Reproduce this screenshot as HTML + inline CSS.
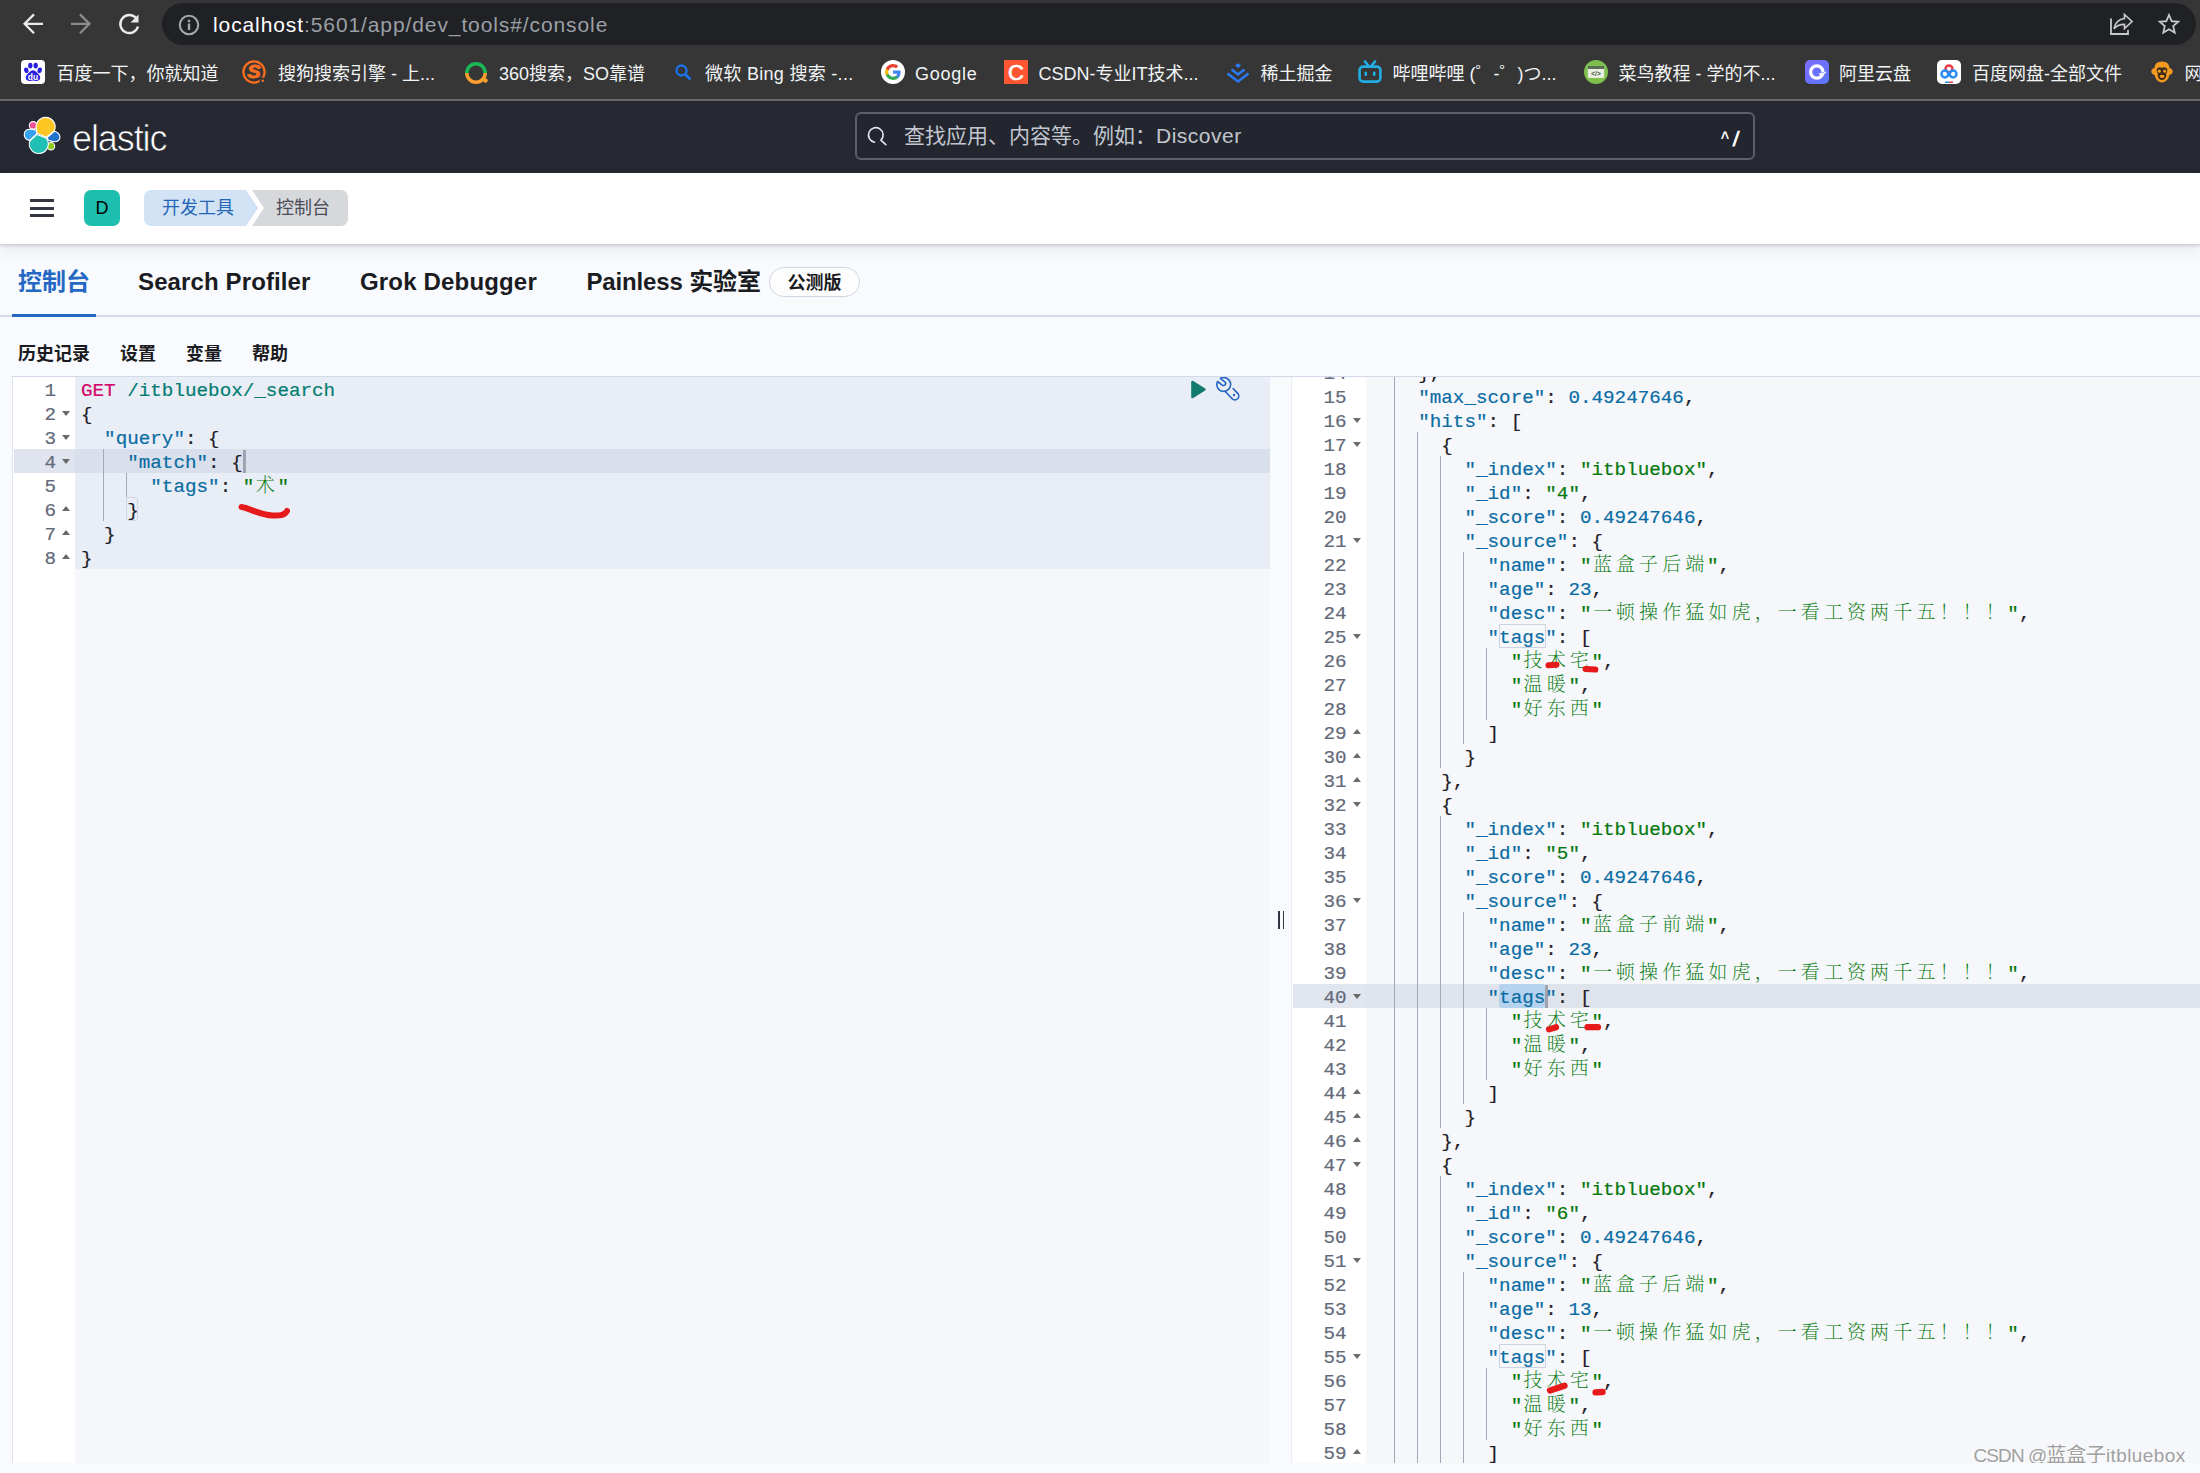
<!DOCTYPE html>
<html lang="zh-CN"><head><meta charset="utf-8"><title>Console - Dev Tools - Elastic</title>
<style>
*{box-sizing:border-box;margin:0;padding:0}
html,body{width:2200px;height:1473px;overflow:hidden;background:#f9fafd}
body{position:relative;font-family:"Liberation Sans","Noto Sans CJK SC",sans-serif;color:#1a1c21}
.abs{position:absolute}
#chrome{position:absolute;left:0;top:0;width:2200px;height:101px;background:#363636}
#chrome .line{position:absolute;left:0;top:98.8px;width:2200px;height:2.2px;background:#686868}
#url{position:absolute;left:162px;top:3px;width:2034px;height:42px;border-radius:21px;background:#202124}
#urltxt{position:absolute;left:213px;top:9.7px;height:30px;line-height:30px;font-size:21px;color:#9aa0a6;white-space:pre;letter-spacing:0.9px}
#urltxt b{font-weight:normal;color:#ffffff}
.bm{position:absolute;top:61px;height:26px;line-height:26px;font-size:18px;color:#f1f3f4;white-space:pre}
.ico{position:absolute;top:60px;width:24px;height:24px}
#kh{position:absolute;left:0;top:101px;width:2200px;height:72px;background:#252830}
#kh .tl{display:none}
#elastic{position:absolute;left:72px;top:15.5px;height:44px;line-height:44px;font-size:36px;color:#fff;letter-spacing:-1.1px;-webkit-text-stroke:0.7px #252830}
#search{position:absolute;left:855px;top:11px;width:900px;height:48px;border:2px solid #5c5f68;border-radius:6px;background:#23262e}
#search .ph{position:absolute;left:47px;top:7px;height:30px;line-height:30px;font-size:21px;color:#c2c6cf;white-space:pre}
#search .kb{position:absolute;left:863px;top:8px;font-size:21px;font-weight:bold;color:#fff;line-height:30px;letter-spacing:1px}
#nav{position:absolute;left:0;top:173px;width:2200px;height:71px;background:#fff;box-shadow:0 1.5px 2.5px rgba(90,100,130,0.22),0 6px 12px rgba(90,100,130,0.10)}
#ham i{position:absolute;left:30px;width:24px;height:3px;background:#343741}
#avatar{position:absolute;left:84px;top:17px;width:36px;height:36px;border-radius:7px;background:#1fbfb0;color:#000;font-size:18px;line-height:36px;text-align:center}
.bc{position:absolute;top:18.3px;height:36px;line-height:35px;font-size:18px;white-space:pre}
#tabs .t{position:absolute;top:263.5px;height:36px;line-height:36px;font-size:24px;font-weight:bold;color:#1a1c21;white-space:pre}
#tabline{position:absolute;left:0;top:315px;width:2200px;height:2px;background:#d5dbe7}
#tabul{position:absolute;left:12px;top:314px;width:84px;height:3px;background:#2367c0}
#badge{position:absolute;left:769px;top:267px;width:91px;height:30px;border:1.5px solid #cfd6e3;border-radius:15px;font-size:18px;font-weight:bold;line-height:30.5px;text-align:center;color:#1a1c21;background:#fdfdfe}
.sm{position:absolute;top:339.8px;height:28px;line-height:28px;font-size:18px;font-weight:bold;color:#1a1c21;white-space:pre}
#edline{position:absolute;left:12px;top:375.5px;width:2188px;height:1.5px;background:#d3d9e6}
#left{position:absolute;left:12px;top:377px;width:1258px;height:1086px;background:#f5f7fa;overflow:hidden;border-left:1px solid #dfe3ec}
#right{position:absolute;left:1291px;top:377px;width:909px;height:1086px;background:#f5f7fa;overflow:hidden;border-left:1px solid #eaedf4}
.gut{position:absolute;left:0;top:0;height:1086px;background:#fff}
.code{font-family:"Liberation Mono","Noto Serif CJK SC",monospace;font-size:19.25px}
.ln{position:absolute;height:24px;line-height:24px;text-align:right;color:#626978;white-space:pre;-webkit-text-stroke:0.2px currentColor}
.cl{position:absolute;height:24px;line-height:24px;white-space:pre;color:#1f2127;-webkit-text-stroke:0.2px currentColor}
.cl span, .ln span{position:relative;top:2px}
.cj{font-family:"Noto Serif CJK SC",serif;font-size:19px;font-weight:200;letter-spacing:4.1px;margin-left:1.4px;margin-right:-1.4px;top:2.2px !important;line-height:0;-webkit-text-stroke:0 transparent}
.m{color:#d3076a}.u{color:#017d73}.k{color:#0a6ca3}.s{color:#04780a}.n{color:#0a6ca3}.p{color:#1f2127}
.g{position:absolute;width:1px;background:#a3a9b9}
.fd{position:absolute;width:0;height:0;border-left:4.5px solid transparent;border-right:4.5px solid transparent}
.fd.d{border-top:5.5px solid #6a6a6a}
.fd.up{border-bottom:5.5px solid #6a6a6a}
</style></head>
<body>
<div id="chrome"><div class="line"></div>
<svg class="abs" style="left:20px;top:11px" width="26" height="26" viewBox="0 0 26 26"><path d="M23 12.800H6M14 3.400 4.600 12.800l9.400 9.400" fill="none" stroke="#e8eaed" stroke-width="2.300"/></svg>
<svg class="abs" style="left:68px;top:11px" width="26" height="26" viewBox="0 0 26 26"><path d="M3 12.800h17M12 3.400l9.400 9.400-9.400 9.400" fill="none" stroke="#8a8c8e" stroke-width="2.300"/></svg>
<svg class="abs" style="left:116.300px;top:10.800px" width="26" height="26" viewBox="0 0 26 26"><path d="M20.2 7.2A9 9 0 1 0 22 15.5" fill="none" stroke="#e8eaed" stroke-width="2.4"/><path d="M22.5 3.5v8h-8z" fill="#e8eaed"/></svg>
<div id="url"></div>
<svg class="abs" style="left:178.300px;top:13.500px" width="22" height="22" viewBox="0 0 22 22"><circle cx="11" cy="11" r="9.200" fill="none" stroke="#a2a8ae" stroke-width="2.100"/><rect x="9.800" y="9.500" width="2.400" height="6.500" fill="#a2a8ae"/><rect x="9.800" y="5.800" width="2.400" height="2.400" fill="#a2a8ae"/></svg>
<div id="urltxt"><b>localhost</b>:5601/app/dev_tools#/console</div>
<svg class="abs" style="left:2108px;top:12px" width="27" height="25" viewBox="0 0 27 25"><path d="M3 6.5V22h17v-4" fill="none" stroke="#c7c9cc" stroke-width="1.8"/><path d="M16.5 2.5l7.5 7-7.500 7v-4.200c-5 0-8 1.200-10.500 4.500 1-5.500 4-9.500 10.500-10.300z" fill="none" stroke="#c7c9cc" stroke-width="1.7" stroke-linejoin="miter"/></svg>
<svg class="abs" style="left:2156px;top:11px" width="26" height="26" viewBox="0 0 26 26"><path transform="translate(13 13.500) scale(0.920) translate(-13 -13.500)" d="M13 3.200l2.900 6.700 7.200.65-5.500 4.750 1.650 7.100L13 18.600 6.750 22.400 8.400 15.300 2.900 10.550l7.200-.65z" fill="none" stroke="#c7c9cc" stroke-width="1.9" stroke-linejoin="miter"/></svg>
<svg class="ico" style="left:21px" viewBox="0 0 24 24"><rect width="24" height="24" rx="4" fill="#fff"/><g fill="#2a1fe0"><ellipse cx="5.300" cy="10.300" rx="2.200" ry="2.900" transform="rotate(-15 5.300 10.300)"/><ellipse cx="9.300" cy="5.600" rx="2.200" ry="2.900"/><ellipse cx="14.700" cy="5.600" rx="2.200" ry="2.900"/><ellipse cx="18.700" cy="10.300" rx="2.200" ry="2.900" transform="rotate(15 18.700 10.300)"/><path d="M12 10.200c2.800 0 3.800 2.400 5.600 4.100 2.100 2 2.500 5.600-.9 6.500-1.900.5-3.200-.3-4.700-.3s-2.800.8-4.700.3c-3.400-.9-3-4.500-.9-6.500 1.800-1.700 2.800-4.100 5.600-4.100z"/></g><text x="12" y="19.600" font-size="8.500" font-weight="bold" font-family="Liberation Sans,sans-serif" text-anchor="middle" fill="#fff">du</text></svg>
<div class="bm" style="left:56.5px;letter-spacing:0px">百度一下，你就知道</div>
<svg class="ico" style="left:242px" viewBox="0 0 24 24"><circle cx="12" cy="12" r="10.600" fill="none" stroke="#fd6f1f" stroke-width="2.200"/><text x="10.500" y="18.200" font-size="17.500" font-weight="bold" font-style="italic" font-family="Liberation Sans,sans-serif" text-anchor="middle" fill="#fd6f1f" stroke="#fd6f1f" stroke-width="0.800" transform="scale(1.15 1)">S</text><circle cx="20.500" cy="20.500" r="3" fill="#363636"/><circle cx="20.800" cy="20.800" r="1.300" fill="#fd6f1f"/></svg>
<div class="bm" style="left:278.0px;letter-spacing:0px">搜狗搜索引擎 - 上...</div>
<svg class="ico" style="left:464px" viewBox="0 0 24 24"><path d="M2.800 13a9.200 9.200 0 0 1 18.400 0" fill="none" stroke="#19b955" stroke-width="3.500"/><path d="M2.800 13a9.200 9.200 0 0 0 18.400 0" fill="none" stroke="#ff9f2e" stroke-width="3.500"/><circle cx="21.500" cy="20.500" r="2.200" fill="#ff9f2e"/></svg>
<div class="bm" style="left:499.0px;letter-spacing:0px">360搜索，SO靠谱</div>
<svg class="ico" style="left:671px" viewBox="0 0 24 24"><circle cx="10.500" cy="10.500" r="5" fill="none" stroke="#1a73e8" stroke-width="2.300"/><path d="M14 14l5.500 5.500" stroke="#1a73e8" stroke-width="2.600"/></svg>
<div class="bm" style="left:705.0px;letter-spacing:0.3px">微软 Bing 搜索 -...</div>
<svg class="ico" style="left:881px" viewBox="0 0 24 24"><circle cx="12" cy="12" r="12" fill="#fff"/><path d="M19.600 12.200c0-.6-.05-1.100-.15-1.600H12v3.100h4.300c-.2 1-.75 1.850-1.600 2.400v2h2.550c1.500-1.400 2.350-3.400 2.350-5.900z" fill="#4285f4"/><path d="M12 20c2.150 0 3.950-.7 5.250-1.900l-2.550-2c-.7.470-1.600.750-2.700.750-2.100 0-3.850-1.400-4.500-3.300H4.900v2.050C6.200 18.200 8.900 20 12 20z" fill="#34a853"/><path d="M7.500 13.550c-.15-.5-.25-1-.25-1.550s.1-1.050.25-1.550V8.400H4.900C4.350 9.500 4 10.700 4 12s.35 2.500.9 3.600l2.600-2.050z" fill="#fbbc05"/><path d="M12 7.150c1.200 0 2.250.4 3.100 1.200l2.250-2.250C16 4.800 14.150 4 12 4 8.900 4 6.200 5.800 4.900 8.400l2.600 2.050c.65-1.900 2.400-3.300 4.500-3.300z" fill="#ea4335"/></svg>
<div class="bm" style="left:915.0px;letter-spacing:0.75px">Google</div>
<svg class="ico" style="left:1004px" viewBox="0 0 24 24"><rect width="24" height="24" fill="#fc5531"/><text x="12" y="19.800" font-size="22" font-family="Liberation Sans,sans-serif" text-anchor="middle" fill="#fff" stroke="#fff" stroke-width="0.700">C</text></svg>
<div class="bm" style="left:1038.5px;letter-spacing:0px">CSDN-专业IT技术...</div>
<svg class="ico" style="left:1226px" viewBox="0 0 24 24"><g fill="none" stroke="#2b7bf6" stroke-width="2.500"><path d="M1.500 13.500 12 21.500 22.500 13.500"/><path d="M5.500 9.500 12 14.500 18.500 9.500"/></g><path d="M12 3.200 15 5.600 12 8 9 5.600z" fill="#2b7bf6"/></svg>
<div class="bm" style="left:1260.5px;letter-spacing:0px">稀土掘金</div>
<svg class="ico" style="left:1358px" viewBox="0 0 24 24"><rect x="1.600" y="6.600" width="20.800" height="15" rx="3.500" fill="none" stroke="#23ade5" stroke-width="2.600"/><path d="M7 1.500l3.200 4M17 1.500l-3.200 4" stroke="#23ade5" stroke-width="2.600" stroke-linecap="round"/><rect x="6.500" y="11.500" width="2.600" height="4.500" rx="1.200" fill="#23ade5"/><rect x="14.900" y="11.500" width="2.600" height="4.500" rx="1.200" fill="#23ade5"/></svg>
<div class="bm" style="left:1392.5px;letter-spacing:0px">哔哩哔哩 (゜-゜)つ...</div>
<svg class="ico" style="left:1584px" viewBox="0 0 24 24"><circle cx="12" cy="12" r="12" fill="#7fbf4d"/><rect x="3.800" y="6" width="16.400" height="12" rx="1.500" fill="#e8efe0"/><rect x="3.800" y="6" width="16.400" height="3" fill="#5b6b55"/><text x="12" y="16.300" font-size="6.500" font-weight="bold" font-family="Liberation Sans,sans-serif" text-anchor="middle" fill="#4c5a48">&lt;/&gt;</text></svg>
<div class="bm" style="left:1618.5px;letter-spacing:0px">菜鸟教程 - 学的不...</div>
<svg class="ico" style="left:1805px" viewBox="0 0 24 24"><defs><linearGradient id="ag" x1="0" y1="0" x2="1" y2="1"><stop offset="0" stop-color="#7d6bfb"/><stop offset="1" stop-color="#5a78fb"/></linearGradient></defs><rect width="24" height="24" rx="5" fill="url(#ag)"/><circle cx="11.800" cy="12" r="6.200" fill="none" stroke="#fff" stroke-width="3.200"/><path d="M21.500 11.200c-2.300 2.600-5.200 2.700-7.300 1.600" fill="none" stroke="#6a72fb" stroke-width="1.800"/><path d="M20.300 12.300c-1.600 1.800-3.800 2.100-5.600 1.500" fill="none" stroke="#fff" stroke-width="1.600" stroke-linecap="round"/></svg>
<div class="bm" style="left:1839.0px;letter-spacing:0px">阿里云盘</div>
<svg class="ico" style="left:1937px" viewBox="0 0 24 24"><rect width="24" height="24" rx="5" fill="#fff"/><circle cx="12" cy="8.800" r="3.400" fill="none" stroke="#f0394a" stroke-width="2.500"/><circle cx="7.900" cy="14" r="3.400" fill="none" stroke="#2a8df5" stroke-width="2.500"/><circle cx="16.100" cy="14" r="3.400" fill="none" stroke="#2a8df5" stroke-width="2.500"/><rect x="8" y="21.500" width="4" height="1.500" fill="#2a8df5"/><rect x="12" y="21.500" width="4" height="1.500" fill="#f0394a"/></svg>
<div class="bm" style="left:1972.0px;letter-spacing:0px">百度网盘-全部文件</div>
<svg class="ico" style="left:2150px" viewBox="0 0 24 24"><path d="M12 1.500c4.500 0 7.500 2.800 7.500 6.500 2 .3 3.200 1.800 3.200 3.600s-1.400 3.300-3.300 3.500c-.8 4.400-3.800 7.400-7.400 7.400s-6.600-3-7.400-7.400C2.700 14.900 1.300 13.400 1.300 11.600S2.500 8.300 4.500 8c0-3.700 3-6.500 7.500-6.500z" fill="#f29a22"/><path d="M12 8c1.800-1.600 5-1 5.300 2 .2 1.800-.8 2.800-1.300 4 1 2.700-1 6-4 6s-5-3.300-4-6c-.5-1.200-1.500-2.200-1.300-4 .3-3 3.500-3.600 5.300-2z" fill="#3a2a1a"/><circle cx="9.300" cy="11.200" r="1.600" fill="#f29a22"/><circle cx="14.700" cy="11.200" r="1.600" fill="#f29a22"/><ellipse cx="12" cy="16.300" rx="2.600" ry="1.600" fill="#f29a22"/></svg>
<div class="bm" style="left:2184.5px;letter-spacing:0px">网</div>
</div>
<div id="kh"><div class="tl"></div>
<svg class="abs" style="left:23px;top:15px" width="40" height="40" viewBox="0 0 40 40">
<g stroke="#fff" stroke-width="1.100" stroke-linejoin="round">
<circle cx="10.100" cy="9.400" r="3.800" fill="#f04e98"/>
<circle cx="28" cy="30.200" r="3.700" fill="#8fcb1a"/>
<path d="M4 13.700Q10 12.300 13.200 14.500L13.800 18 6.600 24.500Q1.500 23.500 1.300 19 1.200 15 4 13.700Z" fill="#36a2ef"/>
<path d="M23.900 21.800 31.600 15.200Q36.500 16.500 37 21 37 25 32.300 25.800 28 25.800 25.600 24.300Z" fill="#2274cf"/>
<path d="M14 17.300 13.600 13.700A9.500 9.500 0 1 1 31.200 15L23.300 21.300Z" fill="#fdc623"/>
<path d="M14.100 18.400 23.400 22.300A9.500 9.500 0 1 1 6.800 25Z" fill="#1fbfb3"/>
</g></svg>
<div id="elastic">elastic</div>
<div id="search"><svg class="abs" style="left:8px;top:11px" width="24" height="24" viewBox="0 0 24 24"><path d="M9.53 17.19A7.3 7.3 0 1 1 15.96 15.16L20.8 19.7" fill="none" stroke="#e3e7ee" stroke-width="1.600" stroke-linecap="round"/></svg><div class="ph">查找应用、内容等。例如：<span style="letter-spacing:0.5px">Discover</span></div><div class="kb"><span style="font-size:17px;display:inline-block;transform:scaleX(0.85);position:relative;top:-1px">^</span><span style="display:inline-block;transform:skewX(-9deg);position:relative;top:2px;left:2.3px">/</span></div></div>
</div>
<div id="nav"><div id="ham"><i style="top:26px"></i><i style="top:33.500px"></i><i style="top:41px"></i></div><div id="avatar">D</div>
<svg class="abs" style="left:144px;top:17px" width="206" height="36" viewBox="0 0 206 36"><path d="M7 0H102L114 18 102 36H7a7 7 0 0 1-7-7V7a7 7 0 0 1 7-7z" fill="#d3e3f6"/><path d="M108 0H197a7 7 0 0 1 7 7V29a7 7 0 0 1-7 7H108L120 18z" fill="#d7d8db"/></svg>
<div class="bc" style="left:162px;color:#2466b3">开发工具</div>
<div class="bc" style="left:276px;color:#4a4d57">控制台</div>
</div>
<div id="tabs">
<div class="t" style="left:18px;color:#2468c4">控制台</div>
<div class="t" style="left:138px;letter-spacing:0.12px">Search Profiler</div>
<div class="t" style="left:360px;letter-spacing:0.17px">Grok Debugger</div>
<div class="t" style="left:586.5px;letter-spacing:-0.15px">Painless 实验室</div>
<div id="badge">公测版</div>
</div><div id="tabline"></div><div id="tabul"></div>
<div class="sm" style="left:18px">历史记录</div>
<div class="sm" style="left:120px">设置</div>
<div class="sm" style="left:186px">变量</div>
<div class="sm" style="left:252px">帮助</div>
<div id="edline"></div>
<div id="left" class="code"><div class="gut" style="width:62px"></div>
<div class="abs" style="left:62px;top:0;width:1200px;height:192px;background:#e9edf5"></div>
<div class="abs" style="left:1px;top:72px;width:61px;height:24px;background:#dfe4ee"></div>
<div class="abs" style="left:62px;top:72px;width:1200px;height:24px;background:#dae0eb"></div>
<div class="ln" style="left:0;top:0px;width:43px"><span>1</span></div>
<div class="cl" style="left:68px;top:0px"><span class="m">GET</span><span class="p"> </span><span class="u">/itbluebox/_search</span></div>
<div class="ln" style="left:0;top:24px;width:43px"><span>2</span></div>
<div class="fd d" style="left:48.5px;top:34px"></div>
<div class="cl" style="left:68px;top:24px"><span class="p">{</span></div>
<div class="ln" style="left:0;top:48px;width:43px"><span>3</span></div>
<div class="fd d" style="left:48.5px;top:58px"></div>
<div class="cl" style="left:68px;top:48px"><span class="p">  </span><span class="k">"query"</span><span class="p">: {</span></div>
<div class="ln" style="left:0;top:72px;width:43px"><span>4</span></div>
<div class="fd d" style="left:48.5px;top:82px"></div>
<div class="cl" style="left:68px;top:72px"><span class="p">    </span><span class="k">"match"</span><span class="p">: {</span></div>
<div class="g" style="left:89.90px;top:72px;height:24px"></div>
<div class="ln" style="left:0;top:96px;width:43px"><span>5</span></div>
<div class="cl" style="left:68px;top:96px"><span class="p">      </span><span class="k">"tags"</span><span class="p">: </span><span class="s">"</span><span class="s cj">术</span><span class="s">"</span></div>
<div class="g" style="left:89.90px;top:96px;height:24px"></div>
<div class="g" style="left:113.00px;top:96px;height:24px"></div>
<div class="ln" style="left:0;top:120px;width:43px"><span>6</span></div>
<div class="fd up" style="left:48.5px;top:129px"></div>
<div class="cl" style="left:68px;top:120px"><span class="p">    }</span></div>
<div class="g" style="left:89.90px;top:120px;height:24px"></div>
<div class="ln" style="left:0;top:144px;width:43px"><span>7</span></div>
<div class="fd up" style="left:48.5px;top:153px"></div>
<div class="cl" style="left:68px;top:144px"><span class="p">  }</span></div>
<div class="ln" style="left:0;top:168px;width:43px"><span>8</span></div>
<div class="fd up" style="left:48.5px;top:177px"></div>
<div class="cl" style="left:68px;top:168px"><span class="p">}</span></div>
<div class="abs" style="left:229.70px;top:73px;width:3px;height:23px;background:#9ea3ad"></div>
<div class="abs" style="left:112.70px;top:120px;width:12.05px;height:24px;border:1px solid #d0d5e2;border-radius:3px"></div>
<svg class="abs" style="left:1175.5px;top:0.700px" width="20" height="24" viewBox="0 0 20 24"><path d="M3.300 3.800v15.400L15.600 11.500z" fill="#127a6f" stroke="#127a6f" stroke-width="2.200" stroke-linejoin="round"/></svg>
<svg class="abs" style="left:1199px;top:-1.8px" width="28" height="27" viewBox="0 0 28 27"><g fill="none" stroke="#2365c2" stroke-width="1.600" stroke-linecap="round" stroke-linejoin="round">
<path d="M8.400 3.400 12.800 6.800a2.100 2.100 0 0 1-2.600 3.300L5.500 6.500A6.900 6.900 0 1 0 8.400 3.400z"/>
<path d="M13.500 16.700l6.700 7.000a3.800 3.800 0 0 0 5.500-5.300l-4.600-4.900"/></g><circle cx="22" cy="20" r="1.200" fill="#2365c2"/></svg>
<svg class="abs" style="left:220px;top:120px" width="80" height="30" viewBox="0 0 80 30"><path d="M8.500 10c8 1 18 8 31 8.500 6 .2 12 .5 14.500-4.500" fill="none" stroke="#e61a1a" stroke-width="6" stroke-linecap="round"/></svg>
</div>
<div class="abs" style="left:1278px;top:911px;width:1.600px;height:18px;background:#343741"></div><div class="abs" style="left:1282.500px;top:911px;width:1.600px;height:18px;background:#343741"></div>
<div id="right" class="code"><div class="gut" style="width:74px"></div>
<div class="abs" style="left:1px;top:607px;width:73px;height:24px;background:#e1e5ee"></div>
<div class="abs" style="left:74px;top:607px;width:900px;height:24px;background:#dfe3ec"></div>
<div class="abs" style="left:207.05px;top:607px;width:46.20px;height:24px;background:#b5d3ee;border-radius:3px"></div>
<div class="abs" style="left:253.25px;top:608px;width:2.500px;height:23px;background:#9ea3ad"></div>
<div class="abs" style="left:206.55px;top:247px;width:47.20px;height:24px;border:1px solid #cdd3e1"></div>
<div class="abs" style="left:206.55px;top:967px;width:47.20px;height:24px;border:1px solid #cdd3e1"></div>
<div class="ln" style="left:0;top:-17px;width:54.5px"><span>14</span></div>
<div class="fd up" style="left:60.5px;top:-8px"></div>
<div class="cl" style="left:80px;top:-17px"><span class="p">    },</span></div>
<div class="g" style="left:101.90px;top:-17px;height:24px"></div>
<div class="ln" style="left:0;top:7px;width:54.5px"><span>15</span></div>
<div class="cl" style="left:80px;top:7px"><span class="p">    </span><span class="k">"max_score"</span><span class="p">: </span><span class="n">0.49247646</span><span class="p">,</span></div>
<div class="g" style="left:101.90px;top:7px;height:24px"></div>
<div class="ln" style="left:0;top:31px;width:54.5px"><span>16</span></div>
<div class="fd d" style="left:60.5px;top:41px"></div>
<div class="cl" style="left:80px;top:31px"><span class="p">    </span><span class="k">"hits"</span><span class="p">: [</span></div>
<div class="g" style="left:101.90px;top:31px;height:24px"></div>
<div class="ln" style="left:0;top:55px;width:54.5px"><span>17</span></div>
<div class="fd d" style="left:60.5px;top:65px"></div>
<div class="cl" style="left:80px;top:55px"><span class="p">      {</span></div>
<div class="g" style="left:101.90px;top:55px;height:24px"></div>
<div class="g" style="left:125.00px;top:55px;height:24px"></div>
<div class="ln" style="left:0;top:79px;width:54.5px"><span>18</span></div>
<div class="cl" style="left:80px;top:79px"><span class="p">        </span><span class="k">"_index"</span><span class="p">: </span><span class="s">"itbluebox"</span><span class="p">,</span></div>
<div class="g" style="left:101.90px;top:79px;height:24px"></div>
<div class="g" style="left:125.00px;top:79px;height:24px"></div>
<div class="g" style="left:148.10px;top:79px;height:24px"></div>
<div class="ln" style="left:0;top:103px;width:54.5px"><span>19</span></div>
<div class="cl" style="left:80px;top:103px"><span class="p">        </span><span class="k">"_id"</span><span class="p">: </span><span class="s">"4"</span><span class="p">,</span></div>
<div class="g" style="left:101.90px;top:103px;height:24px"></div>
<div class="g" style="left:125.00px;top:103px;height:24px"></div>
<div class="g" style="left:148.10px;top:103px;height:24px"></div>
<div class="ln" style="left:0;top:127px;width:54.5px"><span>20</span></div>
<div class="cl" style="left:80px;top:127px"><span class="p">        </span><span class="k">"_score"</span><span class="p">: </span><span class="n">0.49247646</span><span class="p">,</span></div>
<div class="g" style="left:101.90px;top:127px;height:24px"></div>
<div class="g" style="left:125.00px;top:127px;height:24px"></div>
<div class="g" style="left:148.10px;top:127px;height:24px"></div>
<div class="ln" style="left:0;top:151px;width:54.5px"><span>21</span></div>
<div class="fd d" style="left:60.5px;top:161px"></div>
<div class="cl" style="left:80px;top:151px"><span class="p">        </span><span class="k">"_source"</span><span class="p">: {</span></div>
<div class="g" style="left:101.90px;top:151px;height:24px"></div>
<div class="g" style="left:125.00px;top:151px;height:24px"></div>
<div class="g" style="left:148.10px;top:151px;height:24px"></div>
<div class="ln" style="left:0;top:175px;width:54.5px"><span>22</span></div>
<div class="cl" style="left:80px;top:175px"><span class="p">          </span><span class="k">"name"</span><span class="p">: </span><span class="s">"</span><span class="s cj">蓝盒子后端</span><span class="s">"</span><span class="p">,</span></div>
<div class="g" style="left:101.90px;top:175px;height:24px"></div>
<div class="g" style="left:125.00px;top:175px;height:24px"></div>
<div class="g" style="left:148.10px;top:175px;height:24px"></div>
<div class="g" style="left:171.20px;top:175px;height:24px"></div>
<div class="ln" style="left:0;top:199px;width:54.5px"><span>23</span></div>
<div class="cl" style="left:80px;top:199px"><span class="p">          </span><span class="k">"age"</span><span class="p">: </span><span class="n">23</span><span class="p">,</span></div>
<div class="g" style="left:101.90px;top:199px;height:24px"></div>
<div class="g" style="left:125.00px;top:199px;height:24px"></div>
<div class="g" style="left:148.10px;top:199px;height:24px"></div>
<div class="g" style="left:171.20px;top:199px;height:24px"></div>
<div class="ln" style="left:0;top:223px;width:54.5px"><span>24</span></div>
<div class="cl" style="left:80px;top:223px"><span class="p">          </span><span class="k">"desc"</span><span class="p">: </span><span class="s">"</span><span class="s cj">一顿操作猛如虎，一看工资两千五！！！</span><span class="s">"</span><span class="p">,</span></div>
<div class="g" style="left:101.90px;top:223px;height:24px"></div>
<div class="g" style="left:125.00px;top:223px;height:24px"></div>
<div class="g" style="left:148.10px;top:223px;height:24px"></div>
<div class="g" style="left:171.20px;top:223px;height:24px"></div>
<div class="ln" style="left:0;top:247px;width:54.5px"><span>25</span></div>
<div class="fd d" style="left:60.5px;top:257px"></div>
<div class="cl" style="left:80px;top:247px"><span class="p">          </span><span class="k">"tags"</span><span class="p">: [</span></div>
<div class="g" style="left:101.90px;top:247px;height:24px"></div>
<div class="g" style="left:125.00px;top:247px;height:24px"></div>
<div class="g" style="left:148.10px;top:247px;height:24px"></div>
<div class="g" style="left:171.20px;top:247px;height:24px"></div>
<div class="ln" style="left:0;top:271px;width:54.5px"><span>26</span></div>
<div class="cl" style="left:80px;top:271px"><span class="p">            </span><span class="s">"</span><span class="s cj">技术宅</span><span class="s">"</span><span class="p">,</span></div>
<div class="g" style="left:101.90px;top:271px;height:24px"></div>
<div class="g" style="left:125.00px;top:271px;height:24px"></div>
<div class="g" style="left:148.10px;top:271px;height:24px"></div>
<div class="g" style="left:171.20px;top:271px;height:24px"></div>
<div class="g" style="left:194.30px;top:271px;height:24px"></div>
<div class="ln" style="left:0;top:295px;width:54.5px"><span>27</span></div>
<div class="cl" style="left:80px;top:295px"><span class="p">            </span><span class="s">"</span><span class="s cj">温暖</span><span class="s">"</span><span class="p">,</span></div>
<div class="g" style="left:101.90px;top:295px;height:24px"></div>
<div class="g" style="left:125.00px;top:295px;height:24px"></div>
<div class="g" style="left:148.10px;top:295px;height:24px"></div>
<div class="g" style="left:171.20px;top:295px;height:24px"></div>
<div class="g" style="left:194.30px;top:295px;height:24px"></div>
<div class="ln" style="left:0;top:319px;width:54.5px"><span>28</span></div>
<div class="cl" style="left:80px;top:319px"><span class="p">            </span><span class="s">"</span><span class="s cj">好东西</span><span class="s">"</span></div>
<div class="g" style="left:101.90px;top:319px;height:24px"></div>
<div class="g" style="left:125.00px;top:319px;height:24px"></div>
<div class="g" style="left:148.10px;top:319px;height:24px"></div>
<div class="g" style="left:171.20px;top:319px;height:24px"></div>
<div class="g" style="left:194.30px;top:319px;height:24px"></div>
<div class="ln" style="left:0;top:343px;width:54.5px"><span>29</span></div>
<div class="fd up" style="left:60.5px;top:352px"></div>
<div class="cl" style="left:80px;top:343px"><span class="p">          ]</span></div>
<div class="g" style="left:101.90px;top:343px;height:24px"></div>
<div class="g" style="left:125.00px;top:343px;height:24px"></div>
<div class="g" style="left:148.10px;top:343px;height:24px"></div>
<div class="g" style="left:171.20px;top:343px;height:24px"></div>
<div class="ln" style="left:0;top:367px;width:54.5px"><span>30</span></div>
<div class="fd up" style="left:60.5px;top:376px"></div>
<div class="cl" style="left:80px;top:367px"><span class="p">        }</span></div>
<div class="g" style="left:101.90px;top:367px;height:24px"></div>
<div class="g" style="left:125.00px;top:367px;height:24px"></div>
<div class="g" style="left:148.10px;top:367px;height:24px"></div>
<div class="ln" style="left:0;top:391px;width:54.5px"><span>31</span></div>
<div class="fd up" style="left:60.5px;top:400px"></div>
<div class="cl" style="left:80px;top:391px"><span class="p">      },</span></div>
<div class="g" style="left:101.90px;top:391px;height:24px"></div>
<div class="g" style="left:125.00px;top:391px;height:24px"></div>
<div class="ln" style="left:0;top:415px;width:54.5px"><span>32</span></div>
<div class="fd d" style="left:60.5px;top:425px"></div>
<div class="cl" style="left:80px;top:415px"><span class="p">      {</span></div>
<div class="g" style="left:101.90px;top:415px;height:24px"></div>
<div class="g" style="left:125.00px;top:415px;height:24px"></div>
<div class="ln" style="left:0;top:439px;width:54.5px"><span>33</span></div>
<div class="cl" style="left:80px;top:439px"><span class="p">        </span><span class="k">"_index"</span><span class="p">: </span><span class="s">"itbluebox"</span><span class="p">,</span></div>
<div class="g" style="left:101.90px;top:439px;height:24px"></div>
<div class="g" style="left:125.00px;top:439px;height:24px"></div>
<div class="g" style="left:148.10px;top:439px;height:24px"></div>
<div class="ln" style="left:0;top:463px;width:54.5px"><span>34</span></div>
<div class="cl" style="left:80px;top:463px"><span class="p">        </span><span class="k">"_id"</span><span class="p">: </span><span class="s">"5"</span><span class="p">,</span></div>
<div class="g" style="left:101.90px;top:463px;height:24px"></div>
<div class="g" style="left:125.00px;top:463px;height:24px"></div>
<div class="g" style="left:148.10px;top:463px;height:24px"></div>
<div class="ln" style="left:0;top:487px;width:54.5px"><span>35</span></div>
<div class="cl" style="left:80px;top:487px"><span class="p">        </span><span class="k">"_score"</span><span class="p">: </span><span class="n">0.49247646</span><span class="p">,</span></div>
<div class="g" style="left:101.90px;top:487px;height:24px"></div>
<div class="g" style="left:125.00px;top:487px;height:24px"></div>
<div class="g" style="left:148.10px;top:487px;height:24px"></div>
<div class="ln" style="left:0;top:511px;width:54.5px"><span>36</span></div>
<div class="fd d" style="left:60.5px;top:521px"></div>
<div class="cl" style="left:80px;top:511px"><span class="p">        </span><span class="k">"_source"</span><span class="p">: {</span></div>
<div class="g" style="left:101.90px;top:511px;height:24px"></div>
<div class="g" style="left:125.00px;top:511px;height:24px"></div>
<div class="g" style="left:148.10px;top:511px;height:24px"></div>
<div class="ln" style="left:0;top:535px;width:54.5px"><span>37</span></div>
<div class="cl" style="left:80px;top:535px"><span class="p">          </span><span class="k">"name"</span><span class="p">: </span><span class="s">"</span><span class="s cj">蓝盒子前端</span><span class="s">"</span><span class="p">,</span></div>
<div class="g" style="left:101.90px;top:535px;height:24px"></div>
<div class="g" style="left:125.00px;top:535px;height:24px"></div>
<div class="g" style="left:148.10px;top:535px;height:24px"></div>
<div class="g" style="left:171.20px;top:535px;height:24px"></div>
<div class="ln" style="left:0;top:559px;width:54.5px"><span>38</span></div>
<div class="cl" style="left:80px;top:559px"><span class="p">          </span><span class="k">"age"</span><span class="p">: </span><span class="n">23</span><span class="p">,</span></div>
<div class="g" style="left:101.90px;top:559px;height:24px"></div>
<div class="g" style="left:125.00px;top:559px;height:24px"></div>
<div class="g" style="left:148.10px;top:559px;height:24px"></div>
<div class="g" style="left:171.20px;top:559px;height:24px"></div>
<div class="ln" style="left:0;top:583px;width:54.5px"><span>39</span></div>
<div class="cl" style="left:80px;top:583px"><span class="p">          </span><span class="k">"desc"</span><span class="p">: </span><span class="s">"</span><span class="s cj">一顿操作猛如虎，一看工资两千五！！！</span><span class="s">"</span><span class="p">,</span></div>
<div class="g" style="left:101.90px;top:583px;height:24px"></div>
<div class="g" style="left:125.00px;top:583px;height:24px"></div>
<div class="g" style="left:148.10px;top:583px;height:24px"></div>
<div class="g" style="left:171.20px;top:583px;height:24px"></div>
<div class="ln" style="left:0;top:607px;width:54.5px"><span>40</span></div>
<div class="fd d" style="left:60.5px;top:617px"></div>
<div class="cl" style="left:80px;top:607px"><span class="p">          </span><span class="k">"tags"</span><span class="p">: [</span></div>
<div class="g" style="left:101.90px;top:607px;height:24px"></div>
<div class="g" style="left:125.00px;top:607px;height:24px"></div>
<div class="g" style="left:148.10px;top:607px;height:24px"></div>
<div class="g" style="left:171.20px;top:607px;height:24px"></div>
<div class="ln" style="left:0;top:631px;width:54.5px"><span>41</span></div>
<div class="cl" style="left:80px;top:631px"><span class="p">            </span><span class="s">"</span><span class="s cj">技术宅</span><span class="s">"</span><span class="p">,</span></div>
<div class="g" style="left:101.90px;top:631px;height:24px"></div>
<div class="g" style="left:125.00px;top:631px;height:24px"></div>
<div class="g" style="left:148.10px;top:631px;height:24px"></div>
<div class="g" style="left:171.20px;top:631px;height:24px"></div>
<div class="g" style="left:194.30px;top:631px;height:24px"></div>
<div class="ln" style="left:0;top:655px;width:54.5px"><span>42</span></div>
<div class="cl" style="left:80px;top:655px"><span class="p">            </span><span class="s">"</span><span class="s cj">温暖</span><span class="s">"</span><span class="p">,</span></div>
<div class="g" style="left:101.90px;top:655px;height:24px"></div>
<div class="g" style="left:125.00px;top:655px;height:24px"></div>
<div class="g" style="left:148.10px;top:655px;height:24px"></div>
<div class="g" style="left:171.20px;top:655px;height:24px"></div>
<div class="g" style="left:194.30px;top:655px;height:24px"></div>
<div class="ln" style="left:0;top:679px;width:54.5px"><span>43</span></div>
<div class="cl" style="left:80px;top:679px"><span class="p">            </span><span class="s">"</span><span class="s cj">好东西</span><span class="s">"</span></div>
<div class="g" style="left:101.90px;top:679px;height:24px"></div>
<div class="g" style="left:125.00px;top:679px;height:24px"></div>
<div class="g" style="left:148.10px;top:679px;height:24px"></div>
<div class="g" style="left:171.20px;top:679px;height:24px"></div>
<div class="g" style="left:194.30px;top:679px;height:24px"></div>
<div class="ln" style="left:0;top:703px;width:54.5px"><span>44</span></div>
<div class="fd up" style="left:60.5px;top:712px"></div>
<div class="cl" style="left:80px;top:703px"><span class="p">          ]</span></div>
<div class="g" style="left:101.90px;top:703px;height:24px"></div>
<div class="g" style="left:125.00px;top:703px;height:24px"></div>
<div class="g" style="left:148.10px;top:703px;height:24px"></div>
<div class="g" style="left:171.20px;top:703px;height:24px"></div>
<div class="ln" style="left:0;top:727px;width:54.5px"><span>45</span></div>
<div class="fd up" style="left:60.5px;top:736px"></div>
<div class="cl" style="left:80px;top:727px"><span class="p">        }</span></div>
<div class="g" style="left:101.90px;top:727px;height:24px"></div>
<div class="g" style="left:125.00px;top:727px;height:24px"></div>
<div class="g" style="left:148.10px;top:727px;height:24px"></div>
<div class="ln" style="left:0;top:751px;width:54.5px"><span>46</span></div>
<div class="fd up" style="left:60.5px;top:760px"></div>
<div class="cl" style="left:80px;top:751px"><span class="p">      },</span></div>
<div class="g" style="left:101.90px;top:751px;height:24px"></div>
<div class="g" style="left:125.00px;top:751px;height:24px"></div>
<div class="ln" style="left:0;top:775px;width:54.5px"><span>47</span></div>
<div class="fd d" style="left:60.5px;top:785px"></div>
<div class="cl" style="left:80px;top:775px"><span class="p">      {</span></div>
<div class="g" style="left:101.90px;top:775px;height:24px"></div>
<div class="g" style="left:125.00px;top:775px;height:24px"></div>
<div class="ln" style="left:0;top:799px;width:54.5px"><span>48</span></div>
<div class="cl" style="left:80px;top:799px"><span class="p">        </span><span class="k">"_index"</span><span class="p">: </span><span class="s">"itbluebox"</span><span class="p">,</span></div>
<div class="g" style="left:101.90px;top:799px;height:24px"></div>
<div class="g" style="left:125.00px;top:799px;height:24px"></div>
<div class="g" style="left:148.10px;top:799px;height:24px"></div>
<div class="ln" style="left:0;top:823px;width:54.5px"><span>49</span></div>
<div class="cl" style="left:80px;top:823px"><span class="p">        </span><span class="k">"_id"</span><span class="p">: </span><span class="s">"6"</span><span class="p">,</span></div>
<div class="g" style="left:101.90px;top:823px;height:24px"></div>
<div class="g" style="left:125.00px;top:823px;height:24px"></div>
<div class="g" style="left:148.10px;top:823px;height:24px"></div>
<div class="ln" style="left:0;top:847px;width:54.5px"><span>50</span></div>
<div class="cl" style="left:80px;top:847px"><span class="p">        </span><span class="k">"_score"</span><span class="p">: </span><span class="n">0.49247646</span><span class="p">,</span></div>
<div class="g" style="left:101.90px;top:847px;height:24px"></div>
<div class="g" style="left:125.00px;top:847px;height:24px"></div>
<div class="g" style="left:148.10px;top:847px;height:24px"></div>
<div class="ln" style="left:0;top:871px;width:54.5px"><span>51</span></div>
<div class="fd d" style="left:60.5px;top:881px"></div>
<div class="cl" style="left:80px;top:871px"><span class="p">        </span><span class="k">"_source"</span><span class="p">: {</span></div>
<div class="g" style="left:101.90px;top:871px;height:24px"></div>
<div class="g" style="left:125.00px;top:871px;height:24px"></div>
<div class="g" style="left:148.10px;top:871px;height:24px"></div>
<div class="ln" style="left:0;top:895px;width:54.5px"><span>52</span></div>
<div class="cl" style="left:80px;top:895px"><span class="p">          </span><span class="k">"name"</span><span class="p">: </span><span class="s">"</span><span class="s cj">蓝盒子后端</span><span class="s">"</span><span class="p">,</span></div>
<div class="g" style="left:101.90px;top:895px;height:24px"></div>
<div class="g" style="left:125.00px;top:895px;height:24px"></div>
<div class="g" style="left:148.10px;top:895px;height:24px"></div>
<div class="g" style="left:171.20px;top:895px;height:24px"></div>
<div class="ln" style="left:0;top:919px;width:54.5px"><span>53</span></div>
<div class="cl" style="left:80px;top:919px"><span class="p">          </span><span class="k">"age"</span><span class="p">: </span><span class="n">13</span><span class="p">,</span></div>
<div class="g" style="left:101.90px;top:919px;height:24px"></div>
<div class="g" style="left:125.00px;top:919px;height:24px"></div>
<div class="g" style="left:148.10px;top:919px;height:24px"></div>
<div class="g" style="left:171.20px;top:919px;height:24px"></div>
<div class="ln" style="left:0;top:943px;width:54.5px"><span>54</span></div>
<div class="cl" style="left:80px;top:943px"><span class="p">          </span><span class="k">"desc"</span><span class="p">: </span><span class="s">"</span><span class="s cj">一顿操作猛如虎，一看工资两千五！！！</span><span class="s">"</span><span class="p">,</span></div>
<div class="g" style="left:101.90px;top:943px;height:24px"></div>
<div class="g" style="left:125.00px;top:943px;height:24px"></div>
<div class="g" style="left:148.10px;top:943px;height:24px"></div>
<div class="g" style="left:171.20px;top:943px;height:24px"></div>
<div class="ln" style="left:0;top:967px;width:54.5px"><span>55</span></div>
<div class="fd d" style="left:60.5px;top:977px"></div>
<div class="cl" style="left:80px;top:967px"><span class="p">          </span><span class="k">"tags"</span><span class="p">: [</span></div>
<div class="g" style="left:101.90px;top:967px;height:24px"></div>
<div class="g" style="left:125.00px;top:967px;height:24px"></div>
<div class="g" style="left:148.10px;top:967px;height:24px"></div>
<div class="g" style="left:171.20px;top:967px;height:24px"></div>
<div class="ln" style="left:0;top:991px;width:54.5px"><span>56</span></div>
<div class="cl" style="left:80px;top:991px"><span class="p">            </span><span class="s">"</span><span class="s cj">技术宅</span><span class="s">"</span><span class="p">,</span></div>
<div class="g" style="left:101.90px;top:991px;height:24px"></div>
<div class="g" style="left:125.00px;top:991px;height:24px"></div>
<div class="g" style="left:148.10px;top:991px;height:24px"></div>
<div class="g" style="left:171.20px;top:991px;height:24px"></div>
<div class="g" style="left:194.30px;top:991px;height:24px"></div>
<div class="ln" style="left:0;top:1015px;width:54.5px"><span>57</span></div>
<div class="cl" style="left:80px;top:1015px"><span class="p">            </span><span class="s">"</span><span class="s cj">温暖</span><span class="s">"</span><span class="p">,</span></div>
<div class="g" style="left:101.90px;top:1015px;height:24px"></div>
<div class="g" style="left:125.00px;top:1015px;height:24px"></div>
<div class="g" style="left:148.10px;top:1015px;height:24px"></div>
<div class="g" style="left:171.20px;top:1015px;height:24px"></div>
<div class="g" style="left:194.30px;top:1015px;height:24px"></div>
<div class="ln" style="left:0;top:1039px;width:54.5px"><span>58</span></div>
<div class="cl" style="left:80px;top:1039px"><span class="p">            </span><span class="s">"</span><span class="s cj">好东西</span><span class="s">"</span></div>
<div class="g" style="left:101.90px;top:1039px;height:24px"></div>
<div class="g" style="left:125.00px;top:1039px;height:24px"></div>
<div class="g" style="left:148.10px;top:1039px;height:24px"></div>
<div class="g" style="left:171.20px;top:1039px;height:24px"></div>
<div class="g" style="left:194.30px;top:1039px;height:24px"></div>
<div class="ln" style="left:0;top:1063px;width:54.5px"><span>59</span></div>
<div class="fd up" style="left:60.5px;top:1072px"></div>
<div class="cl" style="left:80px;top:1063px"><span class="p">          ]</span></div>
<div class="g" style="left:101.90px;top:1063px;height:24px"></div>
<div class="g" style="left:125.00px;top:1063px;height:24px"></div>
<div class="g" style="left:148.10px;top:1063px;height:24px"></div>
<div class="g" style="left:171.20px;top:1063px;height:24px"></div>
<svg class="abs" style="left:0;top:0" width="908" height="1086" viewBox="0 0 908 1086">
<path d="M256.5 288.3L264.5 287.8" stroke="#e61a1a" stroke-width="6" stroke-linecap="round"/><path d="M293.5 292.0L303.3 292.5" stroke="#e61a1a" stroke-width="6" stroke-linecap="round"/>
<path d="M257.0 652.4L264.0 650.2" stroke="#e61a1a" stroke-width="6.2" stroke-linecap="round"/><path d="M295.5 650.2L306.0 650.2" stroke="#e61a1a" stroke-width="6.2" stroke-linecap="round"/>
<path d="M258.0 1013.4L272.5 1008.8" stroke="#e61a1a" stroke-width="6.3" stroke-linecap="round"/><path d="M303.5 1015.3L310.6 1015.0" stroke="#e61a1a" stroke-width="6.3" stroke-linecap="round"/>
</svg>
<div class="abs" style="left:681.5px;top:1066px;font-family:'Liberation Sans','Noto Sans CJK SC',sans-serif;font-size:19px;line-height:24px;color:#a0a0a0;white-space:pre;text-shadow:1px 1px 0 #fff"><span style="letter-spacing:-0.9px">CSDN @</span><span style="font-size:20px;letter-spacing:-0.2px">蓝盒子</span><span style="letter-spacing:0.4px">itbluebox</span></div>
</div>
</body></html>
